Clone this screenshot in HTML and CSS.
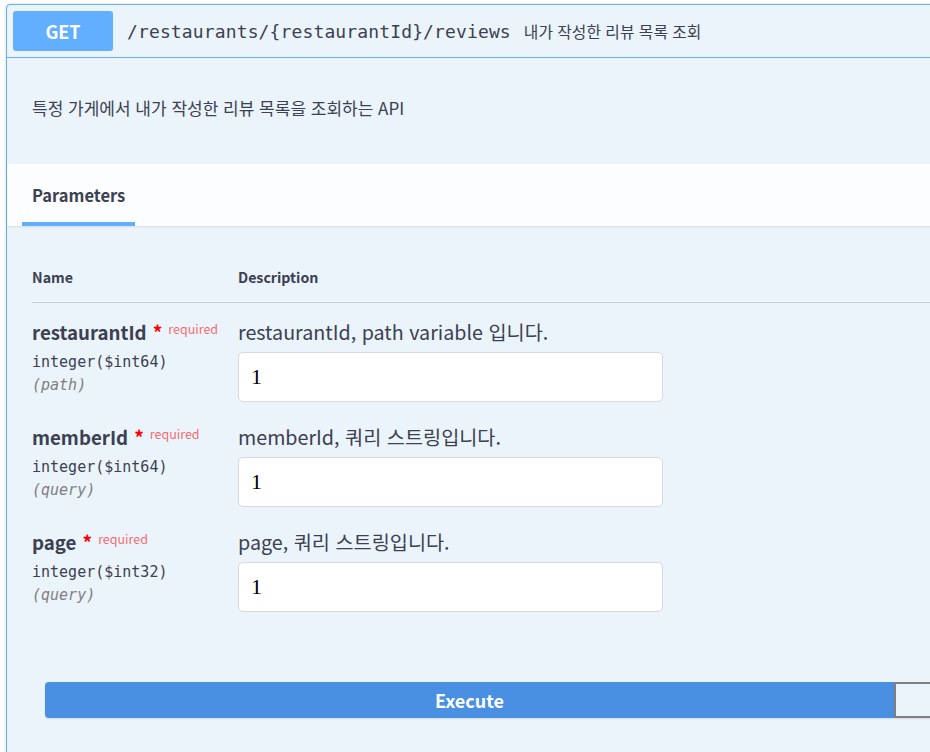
FILE: index.html
```html
<!DOCTYPE html>
<html lang="ko">
<head>
<meta charset="utf-8">
<title>Swagger operation</title>
<link rel="stylesheet" href="styles.css">
</head>
<body>
<div class="opblock">
  <div class="summary">
    <span class="method">GET</span>
    <span class="path">/restaurants/{restaurantId}/reviews</span>
    <span class="summary-desc">내가 작성한 리뷰 목록 조회</span>
  </div>
  <div class="op-body">
    <div class="description">
      <p>특정 가게에서 내가 작성한 리뷰 목록을 조회하는 API</p>
    </div>
    <div class="section-header">
      <div class="tab">Parameters</div>
    </div>
    <div class="params">
      <div class="thead">
        <div class="th th-name">Name</div>
        <div class="th">Description</div>
      </div>
      <div class="row">
        <div class="col-name">
          <div class="pname">restaurantId<span class="star">*</span><span class="req">required</span></div>
          <div class="ptype">integer($int64)</div>
          <div class="pin">(path)</div>
        </div>
        <div class="col-desc">
          <div class="pdesc">restaurantId, path variable 입니다.</div>
          <input class="pinput" type="text" value="1">
        </div>
      </div>
      <div class="row">
        <div class="col-name">
          <div class="pname">memberId<span class="star">*</span><span class="req">required</span></div>
          <div class="ptype">integer($int64)</div>
          <div class="pin">(query)</div>
        </div>
        <div class="col-desc">
          <div class="pdesc">memberId, 쿼리 스트링입니다.</div>
          <input class="pinput" type="text" value="1">
        </div>
      </div>
      <div class="row">
        <div class="col-name">
          <div class="pname">page<span class="star">*</span><span class="req">required</span></div>
          <div class="ptype">integer($int32)</div>
          <div class="pin">(query)</div>
        </div>
        <div class="col-desc">
          <div class="pdesc">page, 쿼리 스트링입니다.</div>
          <input class="pinput" type="text" value="1">
        </div>
      </div>
    </div>
    <div class="execute-wrapper">
      <button class="btn execute">Execute</button>
      <button class="btn clear"></button>
    </div>
  </div>
</div>
</body>
</html>
```
FILE: styles.css
```css
html, body {
  margin: 0;
  padding: 0;
  background: #ffffff;
  overflow: hidden;
  height: 752px;
}

body {
  font-family: "Noto Sans CJK KR", "Noto Sans", sans-serif;
  color: #3b4151;
}

.opblock {
  margin: 4px 0 0 6px;
  width: 1100px;
  border: 1px solid #61affe;
  border-radius: 4px;
  background: #ebf3fb;
  box-shadow: 0 0 3px rgba(0, 0, 0, 0.19);
}

.summary {
  display: flex;
  align-items: center;
  padding: 6px;
  border-bottom: 1px solid #61affe;
}

.method {
  width: 100px;
  height: 40px;
  border-radius: 3px;
  background: #61affe;
  color: #ffffff;
  font-weight: 700;
  font-size: 18px;
  display: flex;
  align-items: center;
  justify-content: center;
  flex-shrink: 0;
}

.path {
  margin-left: 14px;
  font-family: "DejaVu Sans Mono", monospace;
  font-size: 18px;
  letter-spacing: 0.13px;
  color: #3b4151;
}

.summary-desc {
  margin-left: 13px;
  font-size: 15.8px;
  color: #3b4151;
}

.description {
  padding: 38px 25px 44px;
}

.description p {
  margin: 0;
  font-size: 17px;
  line-height: 24px;
}

.section-header {
  height: 62px;
  background: rgba(255, 255, 255, 0.8);
  box-shadow: 0 1px 2px rgba(0, 0, 0, 0.1);
  display: flex;
  padding-left: 15px;
}

.tab {
  box-sizing: border-box;
  height: 62px;
  padding: 4px 10px 0;
  border-bottom: 4px solid #61affe;
  display: flex;
  align-items: center;
  font-size: 16.5px;
  font-weight: 700;
}

.params {
  padding: 25px 0 0 25px;
}

.thead {
  display: grid;
  grid-template-columns: 206px 1fr;
  padding: 15px 0 14px;
  border-bottom: 1px solid rgba(59, 65, 81, 0.2);
}

.th {
  font-size: 14.2px;
  font-weight: 700;
  line-height: 22px;
}

.row {
  display: grid;
  grid-template-columns: 206px 1fr;
  padding: 17px 0 6px;
}

.pname {
  font-size: 18.7px;
  font-weight: 700;
  line-height: 24px;
}

.star {
  margin-left: 6px;
  color: #ff0000;
  font-size: 19px;
}

.req {
  position: relative;
  top: -6px;
  padding-left: 6px;
  font-size: 12.5px;
  font-weight: 400;
  color: rgba(255, 0, 0, 0.6);
}

.ptype {
  margin-top: 4px;
  font-family: "DejaVu Sans Mono", monospace;
  font-size: 15px;
  line-height: 23px;
  color: #3b4151;
}

.pin {
  font-family: "DejaVu Sans Mono", monospace;
  font-size: 15px;
  line-height: 23px;
  font-style: italic;
  color: #808080;
}

.pdesc {
  font-size: 19.7px;
  line-height: 24px;
}

.pinput {
  display: block;
  box-sizing: border-box;
  margin-top: 8px;
  width: 425px;
  height: 50px;
  padding: 0 12px;
  border: 1px solid #d9d9d9;
  border-radius: 5px;
  background: #ffffff;
  font-family: "Liberation Serif", serif;
  font-size: 22px;
  color: #000000;
}

.execute-wrapper {
  display: flex;
  padding: 64px 0 40px 38px;
}

.btn {
  box-sizing: border-box;
  height: 36px;
  flex-shrink: 0;
  font-family: "Noto Sans CJK KR", "Noto Sans", sans-serif;
  font-size: 18px;
  font-weight: 700;
  box-shadow: 0 1px 2px rgba(0, 0, 0, 0.1);
  padding: 0;
}

.execute {
  width: 849px;
  background: #4990e2;
  border: 2px solid #4990e2;
  color: #ffffff;
  border-radius: 4px 0 0 4px;
}

.clear {
  width: 200px;
  background: transparent;
  border: 2px solid #808080;
  border-radius: 0 4px 4px 0;
}
```
